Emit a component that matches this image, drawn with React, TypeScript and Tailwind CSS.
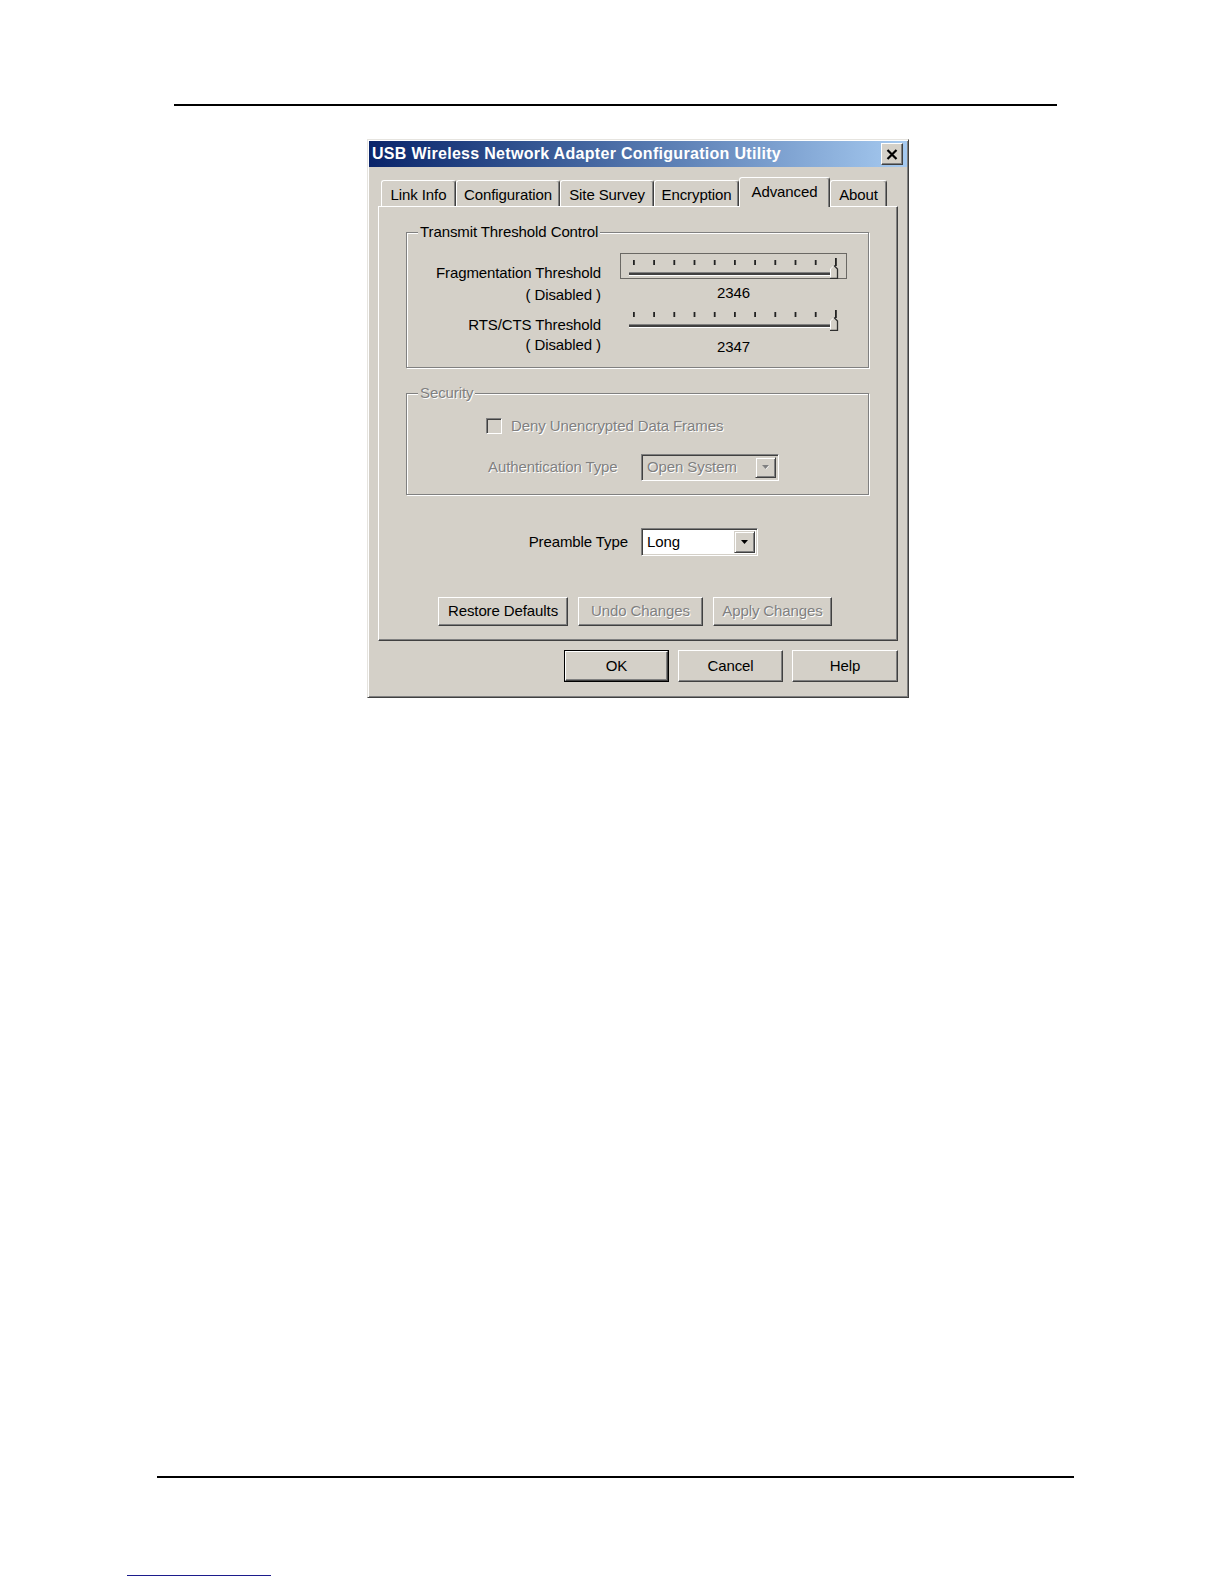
import React from "react"

const UI = "font-['Liberation_Sans',Arial,sans-serif] text-[15px] tracking-[-0.1px] text-black"
const DIM = "text-[#808080] [text-shadow:1px_1px_0_#ffffff]"

function Btn({ label, w, h, disabled, isDefault }: { label: string; w: number; h: number; disabled?: boolean; isDefault?: boolean }) {
  const face = (
    <div className="w-full h-full flex items-center justify-center bg-[#d4d0c8] border border-t-white border-l-white border-r-[#404040] border-b-[#404040] shadow-[inset_-1px_-1px_0_#808080]">
      <span className={disabled ? DIM : "text-black"}>{label}</span>
    </div>
  )
  return (
    <div style={{ width: w, height: h }} className={isDefault ? "border border-black" : ""}>
      {face}
    </div>
  )
}

function Arrow({ disabled }: { disabled?: boolean }) {
  return (
    <div className="w-[21px] h-full flex items-center justify-center bg-[#d4d0c8] border border-t-[#d4d0c8] border-l-[#d4d0c8] border-r-[#404040] border-b-[#404040] shadow-[inset_1px_1px_0_#fff,inset_-1px_-1px_0_#808080]">
      <svg width="9" height="6" viewBox="0 0 9 6">
        {disabled && <path d="M1.5 1.5h7l-3.5 4z" fill="#fff" />}
        <path d="M1 1h7l-3.5 4z" fill={disabled ? "#808080" : "#000"} />
      </svg>
    </div>
  )
}

function Combo({ value, w, h, disabled }: { value: string; w: number; h: number; disabled?: boolean }) {
  return (
    <div
      style={{ width: w, height: h }}
      className={`flex items-stretch border border-t-[#808080] border-l-[#808080] border-r-white border-b-white shadow-[inset_1px_1px_0_#404040,inset_-1px_-1px_0_#d4d0c8] p-[2px] pl-[1px] ${disabled ? "bg-[#d4d0c8]" : "bg-white"}`}
    >
      <div className="flex-1 flex items-center pl-[4px]">
        <span className={disabled ? DIM : "text-black"}>{value}</span>
      </div>
      <Arrow disabled={disabled} />
    </div>
  )
}

function Slider({ focused }: { focused?: boolean }) {
  const ticks = Array.from({ length: 11 }, (_, i) => 13 + i * 20.2)
  return (
    <svg width="227" height="26" viewBox="0 0 227 26" className="block">
      {focused && (
        <rect x="0.5" y="0.5" width="226" height="25" fill="none" stroke="#000" strokeDasharray="1 1" />
      )}
      {ticks.map((x, i) => (
        <rect key={i} x={x} y={i === 10 ? 5 : 7} width="1.8" height={i === 10 ? 8 : 5} fill="#222" />
      ))}
      <rect x="9" y="19" width="206" height="1" fill="#808080" />
      <rect x="9" y="20" width="206" height="2" fill="#404040" />
      <rect x="9" y="22" width="206" height="1" fill="#ffffff" />
      <path d="M210 25V16l4-4 4 4v9z" fill="#d4d0c8" />
      <path d="M210.5 25V16l3.5-3.5" stroke="#fff" fill="none" />
      <path d="M214 12.5l3.5 3.5v9.5h-7.5" stroke="#303030" strokeWidth="1.3" fill="none" />
    </svg>
  )
}

function Group({ label, disabled, className, children }: { label: string; disabled?: boolean; className: string; children: React.ReactNode }) {
  return (
    <div className={`relative ml-[27px] w-[463px] border border-[#808080] shadow-[1px_1px_0_#fff,inset_1px_1px_0_#fff] ${className}`}>
      <span className={`absolute -top-[10px] left-[11px] px-[2px] bg-[#d4d0c8] leading-[18px] ${disabled ? DIM : ""}`}>{label}</span>
      {children}
    </div>
  )
}

const tabs = [
  { label: "Link Info", w: 75 },
  { label: "Configuration", w: 104 },
  { label: "Site Survey", w: 94 },
  { label: "Encryption", w: 85 },
  { label: "Advanced", w: 91, active: true },
  { label: "About", w: 57 },
]

export default function App() {
  return (
    <div className={`w-[1224px] h-[1584px] bg-white flex flex-col ${UI}`}>
      <div className="mt-[104px] ml-[174px] w-[883px] h-[2px] bg-black" />

      {/* dialog */}
      <div className="mt-[33px] ml-[367px] w-[542px] h-[559px] bg-[#d4d0c8] border border-t-[#e6e4df] border-l-[#e6e4df] border-r-[#404040] border-b-[#404040] shadow-[inset_1px_1px_0_#fff,inset_-1px_-1px_0_#808080] p-[1px] flex flex-col">
        <div className="h-[26px] flex items-center justify-between bg-gradient-to-r from-[#0a246a] to-[#a6caf0] pl-[3px] pr-[4px]">
          <span className="text-white font-bold text-[16px] tracking-[0.3px]">USB Wireless Network Adapter Configuration Utility</span>
          <div className="w-[22px] h-[22px] flex items-center justify-center bg-[#d4d0c8] border border-t-white border-l-white border-r-[#404040] border-b-[#404040] shadow-[inset_-1px_-1px_0_#808080]">
            <svg width="12" height="11" viewBox="0 0 12 11">
              <path d="M1.5 1l9 9M10.5 1l-9 9" stroke="#000" strokeWidth="2.2" />
            </svg>
          </div>
        </div>

        {/* tabs */}
        <div className="mt-[10px] ml-[9px] w-[520px] flex flex-col">
          <div className="h-[29px] flex items-end pl-[3px]">
            {tabs.map((t) =>
              t.active ? (
                <div
                  key={t.label}
                  style={{ width: t.w }}
                  className="relative z-10 h-[30px] -mb-[1px] bg-[#d4d0c8] rounded-tl-[3px] rounded-tr-[3px] border-t border-l border-r border-t-white border-l-white border-r-[#404040] shadow-[inset_-1px_0_0_#808080] flex justify-center pt-[3px]"
                >
                  {t.label}
                </div>
              ) : (
                <div
                  key={t.label}
                  style={{ width: t.w }}
                  className="h-[26px] bg-[#d4d0c8] rounded-tl-[3px] rounded-tr-[3px] border-t border-l border-r border-t-white border-l-white border-r-[#404040] shadow-[inset_-1px_0_0_#808080] flex justify-center pt-[3px]"
                >
                  {t.label}
                </div>
              )
            )}
          </div>

          <div className="h-[435px] border border-t-white border-l-white border-r-[#404040] border-b-[#404040] shadow-[inset_-1px_-1px_0_#808080] flex flex-col">
            <Group label="Transmit Threshold Control" className="mt-[25px] h-[136px] pt-[20px]">
              <div className="h-[52px] flex items-start">
                <div className="w-[194px] text-right mt-[9px] leading-[22px]">
                  <div>Fragmentation Threshold</div>
                  <div>( Disabled )</div>
                </div>
                <div className="ml-[19px] flex flex-col">
                  <Slider focused />
                  <div className="mt-[4px] leading-[20px] text-center">2346</div>
                </div>
              </div>
              <div className="flex items-start">
                <div className="w-[194px] text-right mt-[10px] leading-[20px]">
                  <div>RTS/CTS Threshold</div>
                  <div>( Disabled )</div>
                </div>
                <div className="ml-[19px] flex flex-col">
                  <Slider />
                  <div className="mt-[6px] leading-[20px] text-center">2347</div>
                </div>
              </div>
            </Group>

            <Group label="Security" disabled className="mt-[25px] h-[102px] pt-[21px]">
              <div className="ml-[79px] flex items-center">
                <div className="w-[16px] h-[16px] bg-[#d4d0c8] border border-t-[#808080] border-l-[#808080] border-r-white border-b-white shadow-[inset_1px_1px_0_#404040,inset_-1px_-1px_0_#d4d0c8]" />
                <span className={`ml-[9px] ${DIM}`}>Deny Unencrypted Data Frames</span>
              </div>
              <div className="mt-[16px] ml-[81px] flex items-center">
                <span className={`w-[153px] ${DIM}`}>Authentication Type</span>
                <Combo value="Open System" w={138} h={27} disabled />
              </div>
            </Group>

            <div className="mt-[33px] flex items-center">
              <div className="w-[249px] text-right">Preamble Type</div>
              <div className="ml-[13px]">
                <Combo value="Long" w={117} h={28} />
              </div>
            </div>

            <div className="mt-[41px] ml-[59px] flex gap-[10px]">
              <Btn label="Restore Defaults" w={130} h={29} />
              <Btn label="Undo Changes" w={125} h={29} disabled />
              <Btn label="Apply Changes" w={119} h={29} disabled />
            </div>
          </div>
        </div>

        <div className="mt-[9px] flex justify-end gap-[9px] pr-[9px]">
          <Btn label="OK" w={105} h={32} isDefault />
          <Btn label="Cancel" w={105} h={32} />
          <Btn label="Help" w={106} h={32} />
        </div>
      </div>

      <div className="mt-[778px] ml-[157px] w-[917px] h-[2px] bg-black" />
      <div className="mt-[97px] ml-[127px] w-[144px] h-px bg-[#1c1c8c]" />
    </div>
  )
}
